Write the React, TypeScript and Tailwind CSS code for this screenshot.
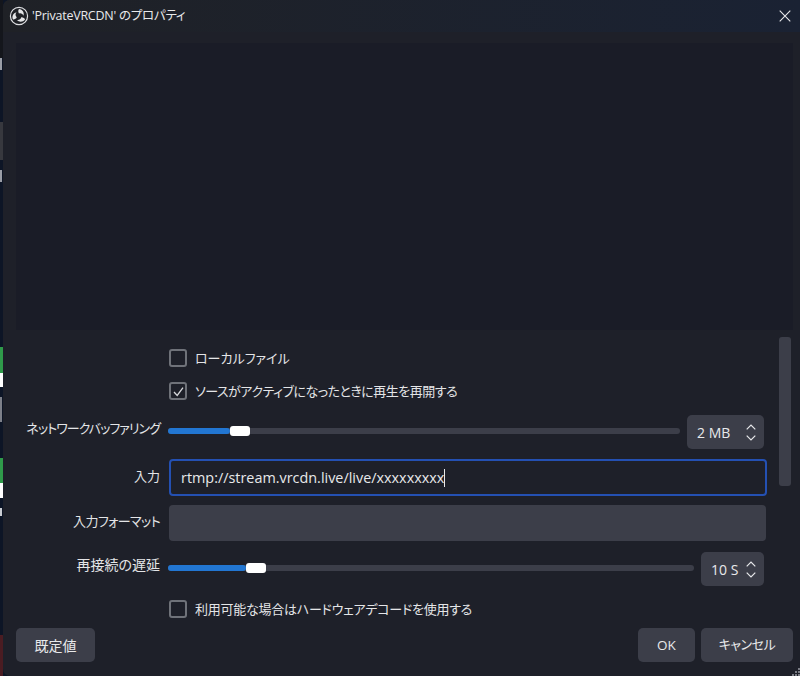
const font = "font-['Open_Sans','Noto_Sans_CJK_JP',sans-serif]";
const jp = "[font-feature-settings:'palt']";

function Check({ checked, label, track = "" }: { checked?: boolean; label: string; track?: string }) {
  return (
    <div className="flex items-center gap-[8px] pl-[166px] h-[18px]">
      <span className="w-[18px] h-[18px] rounded-[3px] border-2 border-[#6f7279] flex items-center justify-center shrink-0">
        {checked && (
          <svg width="13" height="13" viewBox="0 0 13 13" fill="none">
            <path d="M2 7l3.2 3.4L11 2.600" stroke="#d8d9dc" strokeWidth="1.3" />
          </svg>
        )}
      </span>
      <span className={`${jp} ${track} text-[13px] leading-[18px] text-[#e4e5e7] whitespace-nowrap`}>{label}</span>
    </div>
  );
}

function Label({ children, cls = "text-[13px] pb-[4px]" }: { children: string; cls?: string }) {
  return (
    <div className={`${jp} ${cls} w-[157px] text-right leading-[18px] text-[#e4e5e7] shrink-0 whitespace-nowrap`}>
      {children}
    </div>
  );
}

function Slider({ pct }: { pct: number }) {
  return (
    <div className="relative flex-1 h-[6px] rounded-full bg-[#3c3e49] ml-[8px] mb-[2px]">
      <div className="h-full rounded-full bg-[#2276d2]" style={{ width: `${pct}%` }} />
      <div className="absolute top-[-2px] h-[10px] w-[20px] rounded-[3px] bg-white" style={{ left: `${pct}%` }} />
    </div>
  );
}

function Spin({ value, w }: { value: string; w: string }) {
  return (
    <div className={`${w} h-[34px] ml-[7px] mr-[3px] rounded-[5px] bg-[#3c3e49] flex items-center justify-between pl-[10px] pr-[8px] shrink-0`}>
      <span className="text-[14px] text-[#e8e9eb] whitespace-nowrap">{value}</span>
      <span className="flex flex-col gap-[5px]">
        <svg width="10" height="6" viewBox="0 0 10 6" fill="none"><path d="M.7 5.300L5 1l4.300 4.300" stroke="#e8e9eb" strokeWidth="1.2" /></svg>
        <svg width="10" height="6" viewBox="0 0 10 6" fill="none"><path d="M.7.700L5 5 9.300.700" stroke="#e8e9eb" strokeWidth="1.2" /></svg>
      </span>
    </div>
  );
}

function Btn({ children, w, cls = "text-[13.5px]" }: { children: string; w: string; cls?: string }) {
  return (
    <button className={`${w} ${cls} ${jp} h-[34px] rounded-[5px] bg-[#3c3e49] text-[#e8e9eb] flex items-center justify-center`}>
      {children}
    </button>
  );
}

function ObsLogo() {
  const blade = "M0-7C3.500-6.500 5.500-3.500 4.500-.3C3.800-2.200 2-3.200 0-2.600C-1-3.800-1-5.800 0-7Z";
  return (
    <svg width="20" height="20" viewBox="-10 -10 20 20" fill="none" className="shrink-0">
      <circle r="8.600" stroke="#dcdde0" strokeWidth="1.200" />
      <path d={blade} fill="#e4e5e7" />
      <path d={blade} fill="#e4e5e7" transform="rotate(120)" />
      <path d={blade} fill="#e4e5e7" transform="rotate(240)" />
    </svg>
  );
}

function BackdropStrip() {
  return (
    <div className="w-[3px] h-full shrink-0 flex flex-col bg-[#0d1526]">
      <div className="h-[58px] shrink-0 bg-[#14161c]" />
      <div className="h-[12px] shrink-0 w-[2px] bg-[#9a9da6]" />
      <div className="h-[52px] shrink-0" />
      <div className="h-[38px] shrink-0 bg-[#37383e]" />
      <div className="h-[10px] shrink-0" />
      <div className="h-[12px] shrink-0 w-[2px] bg-[#9a9da6]" />
      <div className="h-[165px] shrink-0" />
      <div className="h-[26px] shrink-0 bg-[#2f9a4a]" />
      <div className="h-[14px] shrink-0 bg-white" />
      <div className="h-[10px] shrink-0" />
      <div className="h-[25px] shrink-0 w-[2px] bg-[#7d8089]" />
      <div className="h-[36px] shrink-0" />
      <div className="h-[25px] shrink-0 bg-[#2f9a4a]" />
      <div className="h-[15px] shrink-0 bg-white" />
      <div className="h-[10px] shrink-0" />
      <div className="h-[8px] shrink-0 w-[2px] bg-[#c9ccd2]" />
      <div className="h-[119px] shrink-0" />
      <div className="h-[41px] shrink-0 bg-[#4a1c22]" />
    </div>
  );
}

export default function App() {
  return (
    <div className={`${font} w-[800px] h-[676px] bg-[#0d1526] overflow-hidden flex`}>
      <BackdropStrip />
      <div className="relative flex-1 rounded-l-[7px] bg-[#1e2029] flex flex-col overflow-hidden">
        <div className="h-[32px] shrink-0 flex items-center pl-[6px] pr-[9px] gap-[3px] bg-gradient-to-r from-[#1f2126] to-[#1a2233]">
          <ObsLogo />
          <span className={`${jp} text-[12.5px] tracking-[-0.25px] leading-none text-[#e8e9eb] flex-1`}>'PrivateVRCDN' のプロパティ</span>
          <svg width="12" height="12" viewBox="0 0 12 12" fill="none">
            <path d="M.7.700l10.600 10.600M11.300.700L.7 11.300" stroke="#e8e9eb" strokeWidth="1.100" />
          </svg>
        </div>
        <div className="h-[287px] mt-[11px] ml-[13px] mr-[7px] bg-[#1a1c27] shrink-0" />
        <div className="flex flex-1 min-h-0">
          <div className="w-[764px] shrink-0 flex flex-col pt-[19px]">
            <Check label="ローカルファイル" />
            <div className="h-[15px] shrink-0" />
            <Check checked track="tracking-[-0.5px]" label="ソースがアクティブになったときに再生を再開する" />
            <div className="flex items-center h-[34px] mt-[15px]">
              <Label cls="text-[13px] tracking-[-0.95px] pb-[8px]">ネットワークバッファリング</Label>
              <Slider pct={12.1} />
              <Spin value="2 MB" w="w-[77px]" />
            </div>
            <div className="flex items-center mt-[10px]">
              <Label>入力</Label>
              <div className="flex-1 ml-[9px] h-[37px] rounded-[4px] border-2 border-[#2450b2] flex items-center pl-[10px] text-[14.4px] text-[#e8e9eb]">
                rtmp://stream.vrcdn.live/live/xxxxxxxxx
                <span className="w-px h-[18px] bg-[#e8e9eb]" />
              </div>
            </div>
            <div className="flex items-center mt-[9px]">
              <Label cls="text-[13px] tracking-[-0.6px] pb-[4px]">入力フォーマット</Label>
              <div className="flex-1 ml-[9px] mr-[1px] h-[36px] rounded-[4px] bg-[#3c3e49]" />
            </div>
            <div className="flex items-center h-[34px] mt-[11px]">
              <Label cls="text-[14px] pb-[8px]">再接続の遅延</Label>
              <Slider pct={14.8} />
              <Spin value="10 S" w="w-[63px]" />
            </div>
            <div className="h-[14px] shrink-0" />
            <Check track="tracking-[-0.25px]" label="利用可能な場合はハードウェアデコードを使用する" />
          </div>
          <div className="w-[12px] h-[149px] ml-[12px] mt-[7px] rounded-[3px] bg-[#3c3e49]" />
        </div>
        <div className="flex justify-between pl-[13px] pr-[7px] pb-[14px] shrink-0">
          <Btn w="w-[79px]" cls="text-[14px]">既定値</Btn>
          <div className="flex gap-[6px]">
            <Btn w="w-[57px]">OK</Btn>
            <Btn w="w-[92px]" cls="text-[13px] tracking-[-0.5px]">キャンセル</Btn>
          </div>
        </div>
        <svg width="8" height="8" viewBox="0 0 8 8" className="absolute right-0 bottom-0">
          <path d="M6 0h2v2H6zM3 3h2v2H3zM6 3h2v2H6zM0 6h2v2H0zM3 6h2v2H3zM6 6h2v2H6z" fill="#7a7c84" />
        </svg>
      </div>
    </div>
  );
}
